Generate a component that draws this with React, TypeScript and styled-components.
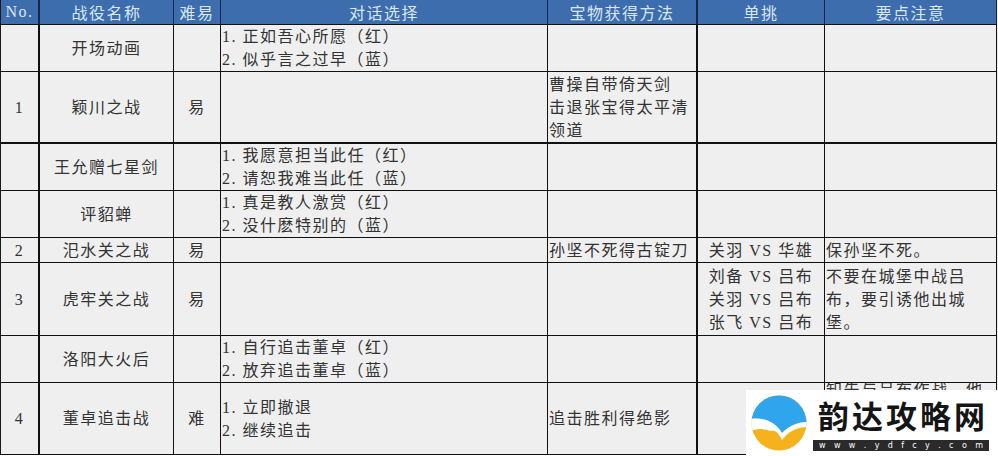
import React from "react";
import styled, { createGlobalStyle } from "styled-components";

const GlobalStyle = createGlobalStyle`
  html, body {
    margin: 0;
    padding: 0;
    background: #ffffff;
  }
`;

const FONT = `"Liberation Serif", "Noto Sans CJK SC", serif`;

const Page = styled.div`
  position: relative;
  width: 998px;
  height: 456px;
  overflow: hidden;
  font-family: ${FONT};
`;

const Sheet = styled.div`
  display: grid;
  grid-template-columns: 39px 134px 47px 327px 150px 127px 172px;
  grid-template-rows: 25px 47px 72px 47px 47px 25px 73px 47px 72px;
  border-left: 1px solid #1a1a1a;
  width: 997px;
  background: #efefef;
`;

const HeadCell = styled.div<{ $thick?: boolean }>`
  box-sizing: border-box;
  display: flex;
  align-items: center;
  justify-content: center;
  background: #3d6dac;
  color: #d9e7f6;
  font-size: 16px;
  letter-spacing: 1.5px;
  border-right: ${(p) => (p.$thick ? "2px" : "1px")} solid #16284a;
  border-bottom: 1px solid #111;
  white-space: nowrap;
`;

const Cell = styled.div<{
  $left?: boolean;
  $thickRight?: boolean;
  $thickBottom?: boolean;
  $top?: boolean;
}>`
  box-sizing: border-box;
  display: flex;
  flex-direction: column;
  justify-content: ${(p) => (p.$top ? "flex-start" : "center")};
  align-items: ${(p) => (p.$left ? "flex-start" : "center")};
  padding-left: ${(p) => (p.$left ? "1px" : "0")};
  overflow: hidden;
  color: #333;
  font-size: 16px;
  letter-spacing: 1.5px;
  line-height: ${(p) => (p.$top ? "13px" : "23px")};
  white-space: nowrap;
  border-right: ${(p) => (p.$thickRight ? "2px" : "1px")} solid #111;
  border-bottom: ${(p) => (p.$thickBottom ? "2px" : "1px")} solid #111;
`;

const Line = styled.div``;

const Logo = styled.div`
  position: absolute;
  right: 0;
  bottom: 0;
  width: 252px;
  height: 66px;
  box-sizing: border-box;
  background: #ffffff;
  display: flex;
  align-items: center;
  padding-left: 5px;
  gap: 6px;
`;

const Brand = styled.div`
  display: flex;
  flex-direction: column;
  width: 176px;
  padding-top: 1px;
`;

const BrandName = styled.div`
  font-family: "Noto Sans CJK SC", sans-serif;
  font-weight: 700;
  font-size: 31px;
  line-height: 36px;
  letter-spacing: 3px;
  color: #151515;
  padding-left: 5px;
  white-space: nowrap;
`;

const UrlBar = styled.div`
  margin-top: 7px;
  height: 11px;
  background: #2a2a2a;
  display: flex;
  align-items: center;
  justify-content: space-between;
  padding: 0 6px;
  color: #ffffff;
  font-family: "DejaVu Sans", sans-serif;
  font-size: 8px;
  line-height: 11px;
`;

type Content = string | string[];

interface Row {
  cells: Content[];
}

const columns = [
  { title: "No." },
  { title: "战役名称" },
  { title: "难易" },
  { title: "对话选择", left: true },
  { title: "宝物获得方法", left: true },
  { title: "单挑" },
  { title: "要点注意", left: true },
];

const rows: Row[] = [
  { cells: ["", "开场动画", "", ["1. 正如吾心所愿（红）", "2. 似乎言之过早（蓝）"], "", "", ""] },
  { cells: ["1", "颖川之战", "易", "", ["曹操自带倚天剑", "击退张宝得太平清", "领道"], "", ""] },
  { cells: ["", "王允赠七星剑", "", ["1. 我愿意担当此任（红）", "2. 请恕我难当此任（蓝）"], "", "", ""] },
  { cells: ["", "评貂蝉", "", ["1. 真是教人激赏（红）", "2. 没什麽特别的（蓝）"], "", "", ""] },
  { cells: ["2", "汜水关之战", "易", "", "孙坚不死得古锭刀", "关羽 VS 华雄", "保孙坚不死。"] },
  {
    cells: [
      "3",
      "虎牢关之战",
      "易",
      "",
      "",
      ["刘备 VS 吕布", "关羽 VS 吕布", "张飞 VS 吕布"],
      ["不要在城堡中战吕", "布，要引诱他出城", "堡。"],
    ],
  },
  { cells: ["", "洛阳大火后", "", ["1. 自行追击董卓（红）", "2. 放弃追击董卓（蓝）"], "", "", ""] },
  {
    cells: ["4", "董卓追击战", "难", ["1. 立即撤退", "2. 继续追击"], "追击胜利得绝影", "", "知先与吕布作战，他"],
  },
];

const LogoMark: React.FC = () => (
  <svg width="56" height="56" viewBox="0 0 56 56">
    <defs>
      <clipPath id="mark">
        <circle cx="28" cy="28" r="27.5" />
      </clipPath>
    </defs>
    <g clipPath="url(#mark)">
      <rect width="56" height="56" fill="#f6b21c" />
      <path d="M0 0 H56 V27 C46 27 38 31 31 38 C25 28 14 22 0 24 Z" fill="#2fa5ee" />
      <path
        d="M0 24 C14 22 25 28 31 38 C38 31 46 27 56 27 V32 C46 32 37 37 31 45 C27 37 24 35 20 36 C14 34 8 33 0 36 Z"
        fill="#ffffff"
      />
    </g>
  </svg>
);

const url = "www.ydfcy.com".split("");

const App: React.FC = () => {
  return (
    <>
      <GlobalStyle />
      <Page>
        <Sheet>
          {columns.map((col, i) => (
            <HeadCell key={col.title} $thick={i === 0 || i === 4}>
              {col.title}
            </HeadCell>
          ))}
          {rows.map((row, r) =>
            row.cells.map((content, c) => (
              <Cell
                key={`${r}-${c}`}
                $left={columns[c].left}
                $thickRight={c === 0 || c === 4}
                $thickBottom={r === 1}
                $top={r === 7 && c === 6}
              >
                {Array.isArray(content)
                  ? content.map((line) => <Line key={line}>{line}</Line>)
                  : content}
              </Cell>
            ))
          )}
        </Sheet>

        <Logo>
          <LogoMark />
          <Brand>
            <BrandName>韵达攻略网</BrandName>
            <UrlBar>
              {url.map((ch, i) => (
                <span key={i}>{ch}</span>
              ))}
            </UrlBar>
          </Brand>
        </Logo>
      </Page>
    </>
  );
};

export default App;
